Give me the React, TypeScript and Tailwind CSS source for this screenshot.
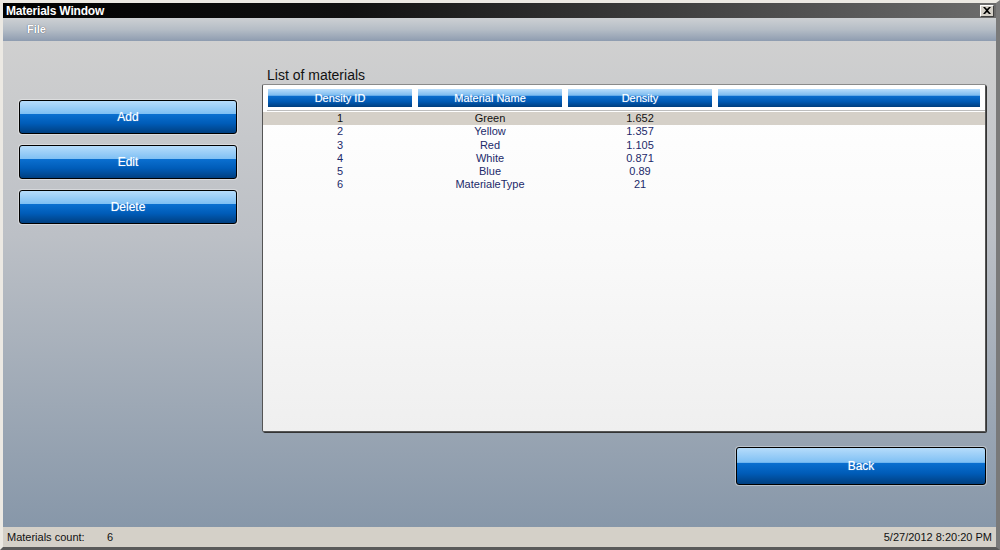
import React from "react";

const btn =
  "flex items-center justify-center rounded-[3px] border border-black text-white bg-[linear-gradient(to_bottom,#b6dcfb_0%,#7fc0f4_40%,#0a6fd0_42%,#005cb8_70%,#003f80_100%)] shadow-[0_0_0_1px_rgba(255,255,255,0.35)] [text-shadow:0_0_1px_rgba(255,255,255,0.6)]";

const hdr =
  "flex items-center justify-center h-[18px] text-white text-[11px] bg-[linear-gradient(to_bottom,#b9ddfb_0%,#7dbcf0_35%,#0a6ccc_40%,#005ab4_70%,#003e7e_100%)] [text-shadow:0_0_1px_rgba(255,255,255,0.5)]";

const rows = [
  ["1", "Green", "1.652"],
  ["2", "Yellow", "1.357"],
  ["3", "Red", "1.105"],
  ["4", "White", "0.871"],
  ["5", "Blue", "0.89"],
  ["6", "MaterialeType", "21"],
];

export default function App() {
  return (
    <div
      className="w-[1000px] h-[550px] flex flex-col bg-[#6e6e6e] border-t-[3px] border-l-[3px] border-[#ece9e3] border-r-[4px] border-r-[#7a7a7a] border-b-[3px] border-b-[#5a5a5a] overflow-hidden"
      style={{ fontFamily: '"Liberation Sans", Arial, sans-serif' }}
    >
      {/* Title bar */}
      <div className="h-[15px] flex items-center justify-between bg-[linear-gradient(to_right,#000000_0%,#111111_35%,#4a4a4a_75%,#6c6c6c_100%)]">
        <span className="pl-[3px] text-white font-bold text-[12px] leading-none tracking-[-0.2px]">
          Materials Window
        </span>
        <div className="mr-[2px] w-[14px] h-[12px] bg-[#d4d0c8] border border-t-white border-l-white border-r-[#404040] border-b-[#404040] flex items-center justify-center">
          <svg width="8" height="7" viewBox="0 0 8 7">
            <path d="M0 0h2l2 2 2-2h2L5 3.5 8 7H6L4 5 2 7H0l3-3.5z" fill="#000" />
          </svg>
        </div>
      </div>
      {/* Menu bar */}
      <div className="h-[23px] flex items-center bg-[linear-gradient(to_bottom,#cdd0d3_0%,#b5bdc6_50%,#8e9cb0_100%)]">
        <span className="ml-[24px] text-white font-bold text-[11px] [text-shadow:0_0_1px_#334]">File</span>
      </div>
      {/* Main */}
      <div className="flex-1 flex bg-[linear-gradient(to_bottom,#d0d0d0_0%,#bcc0c6_40%,#8797a9_100%)]">
        <div className="w-[259px] flex flex-col gap-[11px] pt-[59px] pl-[16px]">
          <div className={`${btn} w-[218px] h-[34px] text-[12px]`}>Add</div>
          <div className={`${btn} w-[218px] h-[34px] text-[12px]`}>Edit</div>
          <div className={`${btn} w-[218px] h-[34px] text-[12px]`}>Delete</div>
        </div>
        <div className="flex flex-col">
          <div className="mt-[25px] ml-[5px] h-[18px] text-[14px] leading-[18px] text-[#111]">List of materials</div>
          <div className="w-[724px] h-[348px] border border-[#555] border-t-[#8a8a8a] rounded-[2px] bg-[linear-gradient(to_bottom,#ffffff_0%,#f9f9f9_50%,#efefef_100%)] shadow-[1px_1px_0_#333] px-[5px] pt-[4px]">
            <div className="flex gap-[6px] h-[18px]">
              <div className={`${hdr} w-[144px]`}>Density ID</div>
              <div className={`${hdr} w-[144px]`}>Material Name</div>
              <div className={`${hdr} w-[144px]`}>Density</div>
              <div className={`${hdr} w-[262px]`}></div>
            </div>
            <div className="mt-[3px] ml-[-1px] mr-[-5px] border-t border-[#bdbdbd]" />
            <div className="mt-[1px] -mx-[5px] flex flex-col text-[11px] leading-[13.3px]">
              {rows.map((r, i) => (
                <div
                  key={i}
                  className={`flex gap-[6px] pl-[5px] h-[13.3px] ${i === 0 ? "bg-[#d5d0c8] text-[#111]" : "text-[#1c2a6a]"}`}
                >
                  <div className="w-[144px] text-center">{r[0]}</div>
                  <div className="w-[144px] text-center">{r[1]}</div>
                  <div className="w-[144px] text-center">{r[2]}</div>
                </div>
              ))}
            </div>
          </div>
          <div className="flex justify-end mt-[15px]">
            <div className={`${btn} w-[250px] h-[38px] text-[12px]`}>Back</div>
          </div>
        </div>
      </div>
      {/* Status bar */}
      <div className="h-[20px] bg-[#d4d0c8] flex items-center justify-between text-[11px] text-[#111] px-[4px]">
        <div className="flex">
          <span className="w-[100px]">Materials count:</span>
          <span>6</span>
        </div>
        <span>5/27/2012 8:20:20 PM</span>
      </div>
    </div>
  );
}
